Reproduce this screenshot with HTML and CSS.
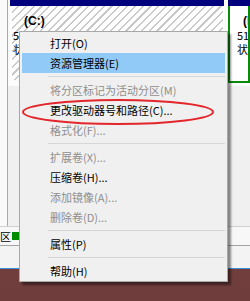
FILE: index.html
```html
<!DOCTYPE html>
<html>
<head>
<meta charset="utf-8">
<link rel="stylesheet" href="styles.css">
</head>
<body>
<div class="window">
  <div class="disk-area">
    <div class="label-col"></div>
    <div class="disk-main">
      <div class="parts">
        <div class="part part-c">
          <div class="bar"></div>
          <div class="body-c">
            <div class="p-title">(C:)</div>
            <div class="p-line">59.90 GB NTFS</div>
            <div class="p-line">状态良好 (系统, 启动, 页面文件, 活动, 主分区)</div>
          </div>
        </div>
        <div class="part part-d">
          <div class="bar"></div>
          <div class="body-d">
            <div class="p-title">(D:)</div>
            <div class="p-line">51.78 GB NTFS</div>
            <div class="p-line">状态良好 (主分区)</div>
          </div>
        </div>
      </div>
    </div>
  </div>
  <div class="legend">
    <span class="lg-text">主分区</span><span class="lg-box"></span>
  </div>
  <div class="bottom"></div>
</div>

<div class="menu">
  <div class="mi">打开(O)</div>
  <div class="mi hl">资源管理器(E)</div>
  <div class="sep"></div>
  <div class="mi dis">将分区标记为活动分区(M)</div>
  <div class="mi">更改驱动器号和路径(C)...</div>
  <div class="mi dis">格式化(F)...</div>
  <div class="sep"></div>
  <div class="mi dis">扩展卷(X)...</div>
  <div class="mi">压缩卷(H)...</div>
  <div class="mi dis">添加镜像(A)...</div>
  <div class="mi dis">删除卷(D)...</div>
  <div class="sep"></div>
  <div class="mi">属性(P)</div>
  <div class="sep"></div>
  <div class="mi">帮助(H)</div>
</div>

<svg class="ring" width="196" height="30" viewBox="0 0 196 30">
  <ellipse cx="97" cy="14" rx="95" ry="12" fill="none" stroke="#e3262b" stroke-width="2"/>
</svg>
</body>
</html>
```

FILE: styles.css
```css
html, body {
  margin: 0;
  padding: 0;
}
body {
  width: 250px;
  height: 301px;
  overflow: hidden;
  position: relative;
  background: linear-gradient(180deg, #7e4745 0%, #6f3d3c 100%);
  font-family: "Noto Sans CJK SC", "Microsoft YaHei", sans-serif;
  font-size: 11px;
  color: #000;
}
.window {
  height: 268px;
  background: #f0f0f0;
  border-bottom: 1px solid #3d8fdc;
  display: flex;
  flex-direction: column;
  overflow: hidden;
}
.disk-area {
  height: 226px;
  display: flex;
  flex: none;
}
.label-col {
  flex: none;
  width: 7px;
  background: #fafafa;
  border-right: 1px solid #a9a9a9;
}
.disk-main {
  flex: 1;
  min-width: 0;
  overflow: hidden;
  background: #f0f0f0;
}
.parts {
  display: flex;
  gap: 4px;
  padding-left: 2px;
  height: 86px;
  background: #fbfbfb;
}
.part-c {
  flex: none;
  width: 214px;
}
.part-d {
  flex: 1;
  min-width: 0;
}
.bar {
  height: 6px;
  background: #00007c;
}
.body-c {
  height: 74px;
  border-left: 2px solid #fff;
  border-right: 1px solid #fff;
  border-bottom: 6px solid #fbfbfb;
  background: repeating-linear-gradient(135deg, #ffffff 0px, #ffffff 4px, #c9c9c9 4px, #c9c9c9 5.5px);
  overflow: hidden;
  white-space: nowrap;
  padding-left: 1px;
}
.body-d {
  height: 75px;
  border: 2px solid #0a8a0a;
  border-top: none;
  background: #fff;
  overflow: hidden;
  white-space: nowrap;
  padding-left: 7px;
}
.p-title {
  font-weight: bold;
  font-size: 12px;
  line-height: 14px;
  padding-top: 8px;
  padding-left: 11px;
  font-family: "Liberation Sans", sans-serif;
}
.body-d .p-title {
  padding-left: 6px;
}
.p-line {
  line-height: 14px;
}
.legend {
  flex: none;
  height: 18px;
  border-top: 1px solid #d0d0d0;
  border-bottom: 1px solid #a3a3a3;
  background: #f7f7f7;
  display: flex;
  align-items: center;
  white-space: nowrap;
  overflow: hidden;
}
.lg-text {
  flex: none;
  margin-left: -22px;
  line-height: 14px;
}
.lg-box {
  flex: none;
  width: 8px;
  height: 8px;
  background: #008a00;
  margin-left: 1px;
}
.bottom {
  flex: 1;
  background: #f3f3f3;
}
.menu {
  position: absolute;
  left: 19px;
  top: 31px;
  width: 203px;
  padding: 1px 2px 0 2px;
  background: #f0f0f0;
  border: 1px solid #a8a8a8;
  box-shadow: 3px 3px 2px rgba(0, 0, 0, 0.45);
}
.mi {
  height: 20px;
  line-height: 20px;
  padding-left: 28px;
  white-space: nowrap;
}
.mi.hl {
  background: #91c9f7;
}
.mi.dis {
  color: #8e8e8e;
}
.sep {
  height: 7px;
  position: relative;
}
.sep::after {
  content: "";
  position: absolute;
  left: 26px;
  right: 0;
  top: 3px;
  height: 1px;
  background: #d7d7d7;
}
.ring {
  position: absolute;
  left: 21px;
  top: 98px;
}
```
